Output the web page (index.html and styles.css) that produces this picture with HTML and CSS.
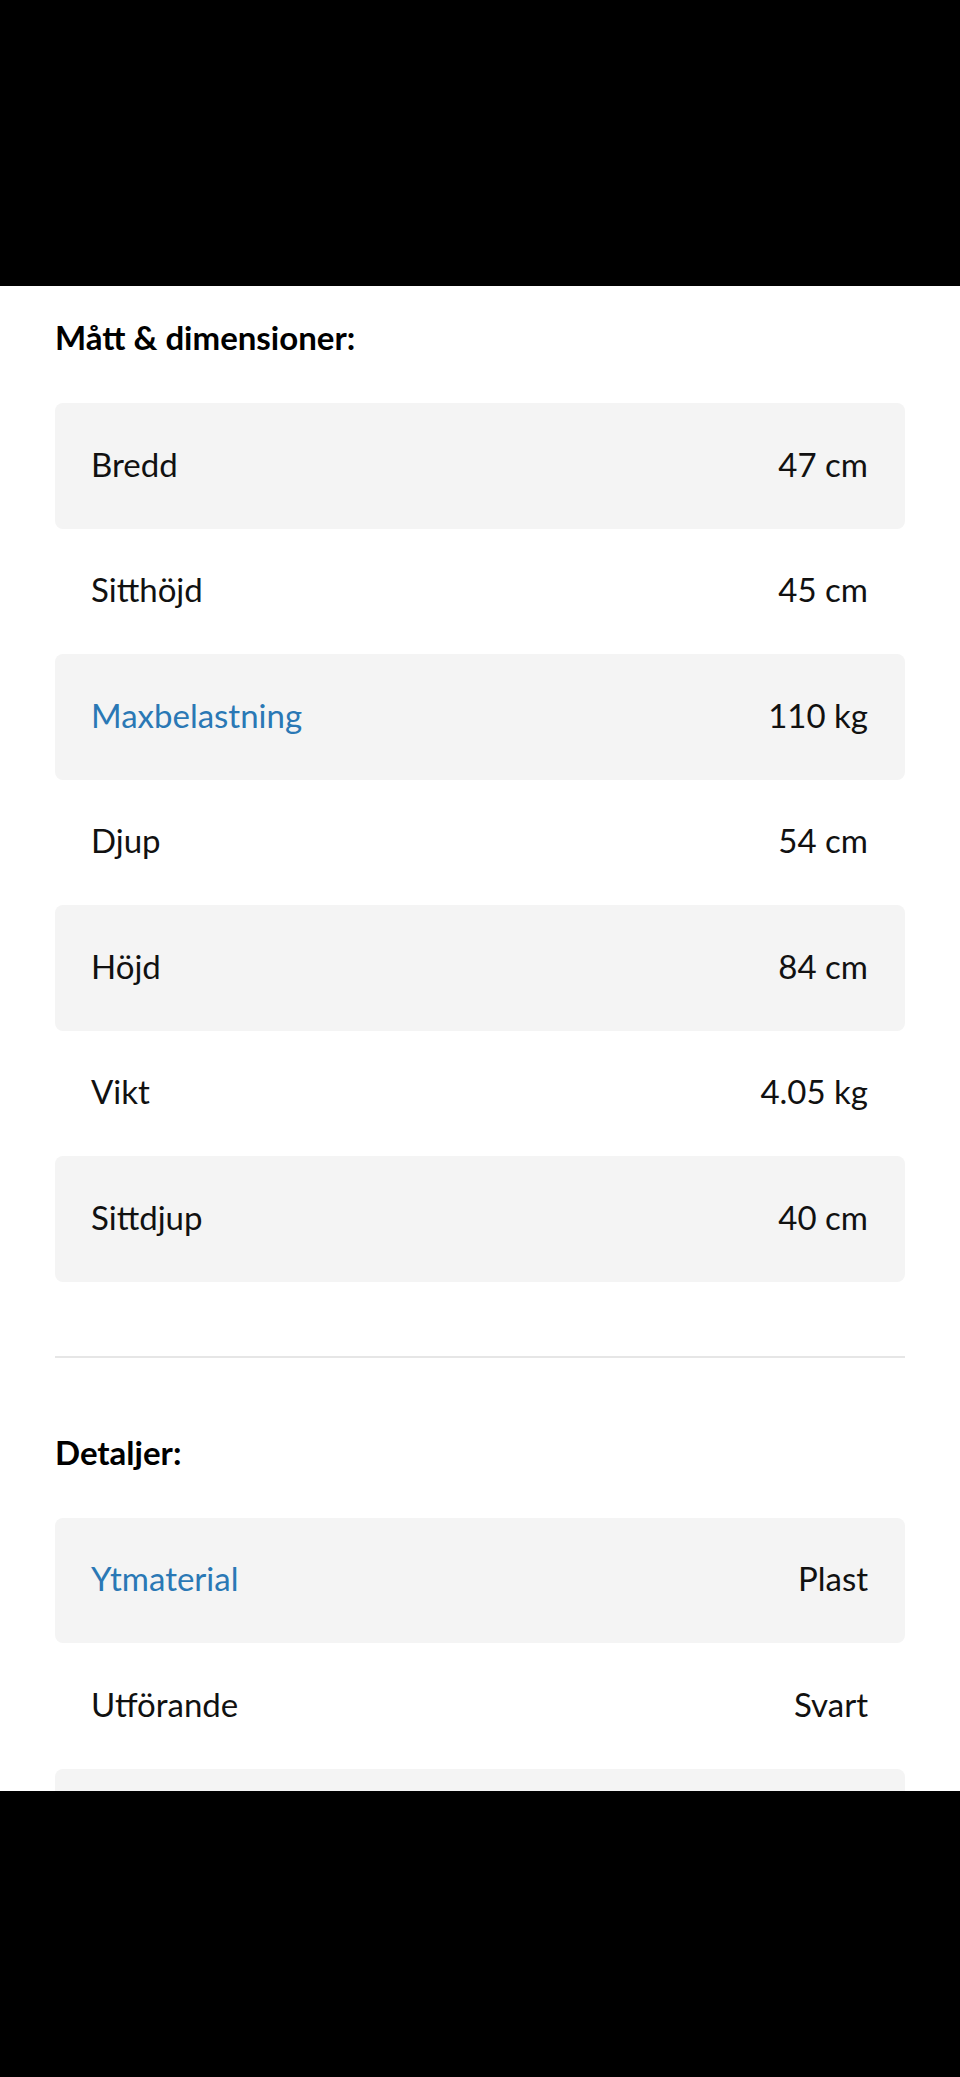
FILE: index.html
```html
<!DOCTYPE html>
<html lang="sv">
<head>
    <meta charset="UTF-8">
    <meta name="viewport" content="width=device-width, initial-scale=1.0">
    <title>Mått &amp; dimensioner</title>
    <link rel="stylesheet" href="styles.css">
</head>
<body>
    <div class="bar-top"></div>

    <div class="specs">
        <h2 class="specs-title">Mått &amp; dimensioner:</h2>
        <div class="spec-list">
            <div class="spec-row"><span class="spec-name">Bredd</span><span class="spec-value">47 cm</span></div>
            <div class="spec-row"><span class="spec-name">Sitthöjd</span><span class="spec-value">45 cm</span></div>
            <div class="spec-row"><a class="spec-name link" href="#">Maxbelastning</a><span class="spec-value">110 kg</span></div>
            <div class="spec-row"><span class="spec-name">Djup</span><span class="spec-value">54 cm</span></div>
            <div class="spec-row"><span class="spec-name">Höjd</span><span class="spec-value">84 cm</span></div>
            <div class="spec-row"><span class="spec-name">Vikt</span><span class="spec-value">4.05 kg</span></div>
            <div class="spec-row"><span class="spec-name">Sittdjup</span><span class="spec-value">40 cm</span></div>
        </div>

        <hr class="divider">

        <h2 class="specs-title second">Detaljer:</h2>
        <div class="spec-list">
            <div class="spec-row"><a class="spec-name link" href="#">Ytmaterial</a><span class="spec-value">Plast</span></div>
            <div class="spec-row"><span class="spec-name">Utförande</span><span class="spec-value">Svart</span></div>
            <div class="spec-row"><span class="spec-name">Material</span><span class="spec-value">Polypropen</span></div>
        </div>
    </div>

    <div class="bar-bottom"></div>
</body>
</html>
```

FILE: styles.css
```css
body {
    margin: 0;
    font-family: Lato, "Open Sans", sans-serif;
    background-color: #fff;
    color: #111;
    height: 2077px;
    overflow: hidden;
    position: relative;
}
.bar-top {
    height: 286px;
    background-color: #000;
}
.bar-bottom {
    position: absolute;
    left: 0;
    right: 0;
    top: 1791px;
    height: 286px;
    background-color: #000;
}
.specs {
    padding: 0 55px;
}
.specs-title {
    margin: 31px 0 46px;
    font-size: 33px;
    line-height: 40px;
    font-weight: bold;
    color: #000;
}
.specs-title.second {
    margin-top: 74px;
    margin-bottom: 46px;
}
.spec-list {
    display: flex;
    flex-direction: column;
}
.spec-row {
    height: 125.5px;
    box-sizing: border-box;
    display: flex;
    justify-content: space-between;
    align-items: center;
    padding: 0 37px 4px 36px;
    border-radius: 8px;
    font-size: 33px;
}
.spec-row:nth-child(odd) {
    background-color: #f4f4f4;
}
.spec-name {
    color: #111;
}
.spec-name.link {
    color: #2a78b5;
    text-decoration: none;
}
.spec-value {
    color: #111;
}
.divider {
    margin: 74px 0 0;
    border: none;
    height: 2px;
    background-color: #e6e6e6;
}
```
